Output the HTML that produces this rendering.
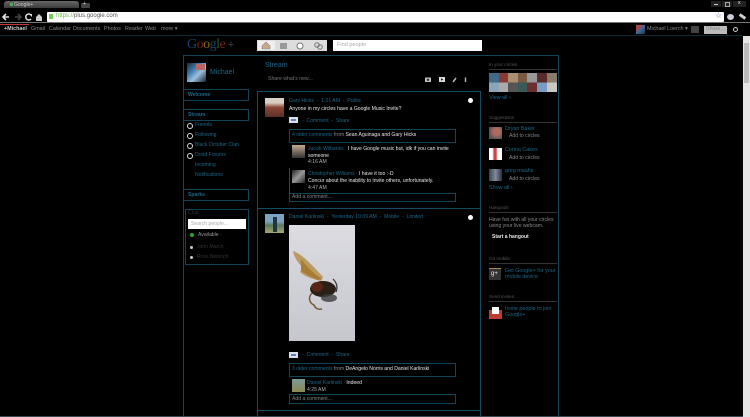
<!DOCTYPE html>
<html><head><meta charset="utf-8"><style>
html,body{margin:0;padding:0;background:#000;width:750px;height:417px;overflow:hidden}
body{position:relative;font-family:"Liberation Sans",sans-serif;font-size:5.1px;color:#ddd}
.a,.t{position:absolute}
.t{white-space:nowrap;line-height:7px}
.b{color:#1c6788}
.w{color:#e8e8e8}
.g{color:#888}
.n{font-size:5.4px;color:#8a8a8a;top:26px}
.box{position:absolute;border:1px solid #134558;box-sizing:border-box}
.hl{position:absolute;height:1px;background:#134558}
.vl{position:absolute;width:1px;background:#134558}
.rad{position:absolute;width:4px;height:4px;border:1px solid #ddd;border-radius:50%}
.head{position:absolute;height:1px;background:#333}
.h{color:#555;font-size:4.6px}
svg{position:absolute;overflow:visible}
</style></head><body>
<!-- chrome -->
<div class="a" style="left:4px;top:1px;width:75px;height:7px;background:linear-gradient(#666,#3c3c3c);border-radius:3px 3px 0 0"></div>
<div class="a" style="left:10px;top:3px;width:3px;height:3px;background:#5a5"></div>
<div class="t" style="left:14px;top:2px;color:#ccc">Google+</div>
<div class="a" style="left:81px;top:3px;width:9px;height:5px;background:#444;border-radius:1px"></div>
<div class="t w" style="left:83px;top:1px">+</div>
<div class="a" style="left:711px;top:1px;width:10px;height:6px;background:#222"></div>
<div class="a" style="left:722px;top:1px;width:10px;height:6px;background:#222"></div>
<div class="a" style="left:733px;top:1px;width:13px;height:6px;background:#222"></div>
<div class="a" style="left:714px;top:4px;width:4px;height:1px;background:#ccc"></div>
<div class="a" style="left:725px;top:2px;width:3px;height:3px;border:1px solid #aaa"></div>
<div class="t w" style="left:738px;top:0">x</div>
<svg width="50" height="12" style="left:0;top:11px"><path d="M3 6H9M6 3L3 6L6 9" fill="none" stroke="#e0e0e0" stroke-width="1.6"/><path d="M15 6H21M18 3L21 6L18 9" fill="none" stroke="#444" stroke-width="1.6"/><path d="M31 4A3 3 0 1 0 31 8" fill="none" stroke="#ddd" stroke-width="1.5"/><path d="M29 3h3v3z" fill="#ddd"/><path d="M36 6L39 3L42 6V10H36Z" fill="#ccc"/></svg>
<div class="a" style="left:47px;top:12px;width:677px;height:10px;background:#fff;border-radius:1px"></div>
<div class="a" style="left:49px;top:14px;width:4px;height:5px;background:#7c5"></div>
<div class="t" style="left:56px;top:13px;font-size:6px;color:#555"><span style="color:#6b4">https://</span>plus.google.com</div>
<div class="t" style="left:715px;top:12px;font-size:8px;color:#47a">☆</div>
<div class="a" style="left:727px;top:14px;width:7px;height:6px;background:#ccd;border-radius:50%"></div>
<div class="a" style="left:739px;top:15px;width:7px;height:3px;background:#ccc;transform:rotate(35deg)"></div>
<div class="a" style="left:0;top:22px;width:750px;height:1px;background:#777"></div>
<div class="a" style="left:0;top:24px;width:29px;height:1px;background:#c33"></div>
<div class="hl" style="left:0;top:35px;width:742px;background:#0d2a36"></div>
<!-- gbar -->
<div class="t" style="left:4px;top:26px;color:#ccc;font-weight:bold;font-size:5.4px">+Michael</div>
<div class="t n" style="left:31px">Gmail</div>
<div class="t n" style="left:49px">Calendar</div>
<div class="t n" style="left:73px">Documents</div>
<div class="t n" style="left:104px">Photos</div>
<div class="t n" style="left:125px">Reader</div>
<div class="t n" style="left:145px">Web</div>
<div class="t n" style="left:161px">more ▾</div>
<div class="a" style="left:636px;top:25px;width:9px;height:9px;background:linear-gradient(135deg,#a44 30%,#3a6aa0 50%,#234)"></div>
<div class="t n" style="left:647px">Michael Loerch ▾</div>
<div class="a" style="left:691px;top:26px;width:8px;height:7px;background:#444"></div>
<div class="a" style="left:704px;top:26px;width:23px;height:8px;background:#bbb"></div>
<div class="t" style="left:706px;top:26px;color:#888;font-size:5.4px">Share...</div>
<div class="a" style="left:733px;top:27px;width:3px;height:3px;border:1.5px solid #ccc;border-radius:50%"></div>
<!-- logo -->
<div class="t" style="left:187px;top:37px;font-family:'Liberation Serif',serif;font-size:14px;line-height:16px;letter-spacing:-.5px"><span style="color:#17446f">G</span><span style="color:#7a2018">o</span><span style="color:#8a6c18">o</span><span style="color:#17446f">g</span><span style="color:#1f6026">l</span><span style="color:#7a2018">e</span><span style="color:#444;font-size:11px;font-family:'Liberation Sans'"> +</span></div>
<!-- nav -->
<div class="a" style="left:257px;top:40px;width:70px;height:11px;background:#ddd"></div>
<div class="a" style="left:258px;top:41px;width:17px;height:9px;background:#efefef"></div>
<svg width="70" height="11" style="left:257px;top:40px"><path d="M5 6L9 2L13 6V9H5Z" fill="#c9a98a" stroke="#888" stroke-width=".6"/><rect x="23" y="3" width="7" height="6" fill="#999"/><circle cx="43" cy="6" r="3" fill="#fff" stroke="#777"/><circle cx="60" cy="5" r="2.3" fill="none" stroke="#777"/><circle cx="63" cy="7" r="2.3" fill="none" stroke="#777"/></svg>
<div class="a" style="left:333px;top:40px;width:149px;height:11px;background:#fff"></div>
<div class="t" style="left:337px;top:42px;font-size:5.6px;color:#aaa">Find people</div>
<!-- frame -->
<div class="hl" style="left:183px;top:55px;width:376px"></div>
<div class="vl" style="left:183px;top:55px;height:362px"></div>
<div class="vl" style="left:558px;top:55px;height:362px"></div>
<!-- left -->
<div class="a" style="left:187px;top:63px;width:19px;height:19px;background:linear-gradient(135deg,#234 5%,#3f7fb5 35%,#9ec0dc 60%,#123)"></div>
<div class="a" style="left:196px;top:64px;width:9px;height:6px;background:#b66"></div>
<div class="t b" style="left:210px;top:69px;font-size:7px">Michael</div>
<div class="box" style="left:183px;top:89px;width:66px;height:12px"></div>
<div class="t b" style="left:188px;top:92px;font-weight:bold">Welcome</div>
<div class="box" style="left:183px;top:109px;width:66px;height:12px"></div>
<div class="t b" style="left:188px;top:112px;font-weight:bold">Stream</div>
<div class="rad" style="left:187px;top:123px"></div><div class="t b" style="left:195px;top:122px">Friends</div>
<div class="rad" style="left:187px;top:133px"></div><div class="t b" style="left:195px;top:132px">Following</div>
<div class="rad" style="left:187px;top:143px"></div><div class="t b" style="left:195px;top:142px">Black October Clan</div>
<div class="rad" style="left:187px;top:153px"></div><div class="t b" style="left:195px;top:152px">Droid Forums</div>
<div class="t b" style="left:195px;top:162px">Incoming</div>
<div class="t b" style="left:195px;top:172px">Notifications</div>
<div class="box" style="left:183px;top:189px;width:66px;height:12px"></div>
<div class="t b" style="left:188px;top:192px;font-weight:bold">Sparks</div>
<div class="box" style="left:185px;top:209px;width:64px;height:56px"></div>
<div class="t" style="left:188px;top:210px;color:#333">Chat</div>
<div class="a" style="left:188px;top:219px;width:58px;height:10px;background:#fff"></div>
<div class="t" style="left:191px;top:221px;color:#aaa">Search people...</div>
<div class="a" style="left:190px;top:233px;width:4px;height:4px;background:#2a2;border-radius:50%"></div>
<div class="t" style="left:198px;top:232px;color:#999">Available ·</div>
<div class="a" style="left:190px;top:246px;width:3px;height:3px;background:#ccc;border-radius:50%"></div>
<div class="t" style="left:197px;top:244px;color:#333">John March</div>
<div class="a" style="left:190px;top:256px;width:3px;height:3px;background:#ccc;border-radius:50%"></div>
<div class="t" style="left:197px;top:254px;color:#333">Ross Belonch</div>
<!-- stream -->
<div class="t b" style="left:265px;top:62px;font-size:7px">Stream</div>
<div class="t" style="left:268px;top:76px;color:#777;font-size:5.2px">Share what's new...</div>
<svg width="50" height="8" style="left:424px;top:76px"><rect x="1" y="1.5" width="6" height="4.5" fill="#bbb"/><circle cx="4" cy="3.8" r="1.2" fill="#333"/><rect x="15" y="1" width="6" height="5" fill="#ddd"/><path d="M17 2.3L19.5 3.5L17 4.8Z" fill="#222"/><path d="M29 6L32 2" stroke="#bbb" stroke-width="1.5"/><path d="M41.500 1.500V6" stroke="#bbb" stroke-width="1.4"/></svg>
<!-- post 1 -->
<div class="box" style="left:257px;top:91px;width:224px;height:326px;border-color:#134d64;border-bottom:0"></div>
<div class="a" style="left:265px;top:98px;width:19px;height:19px;background:linear-gradient(#d8cfc4 25%,#8a4434 50%,#5a3028)"></div>
<div class="t b" style="left:289px;top:98px">Gary Hicks &nbsp;-&nbsp; 1:21 AM &nbsp;-&nbsp; Public</div>
<div class="t w" style="left:289px;top:106px">Anyone in my circles have a Google Music Invite?</div>
<div class="a" style="left:468px;top:98px;width:5px;height:5px;background:#fff;border-radius:50%"></div>
<div class="a" style="left:289px;top:117px;width:9px;height:6px;background:#dde"></div>
<div class="a" style="left:291px;top:119px;width:5px;height:2px;background:#58b"></div>
<div class="t b" style="left:302px;top:118px"> - &nbsp;Comment &nbsp;- &nbsp;Share</div>
<div class="box" style="left:289px;top:129px;width:167px;height:14px"></div>
<div class="t" style="left:292px;top:132px"><span class="b">4 older comments</span> <span class="g">from</span> <span class="w">Sean Aguinaga and Gary Hicks</span></div>
<div class="a" style="left:292px;top:145px;width:13px;height:13px;background:linear-gradient(#c4a890,#333)"></div>
<div class="t" style="left:308px;top:146px"><span class="b">Jacob Wilbanks</span> &nbsp; <span class="w">I have Google music but, idk if you can invite</span></div>
<div class="t w" style="left:308px;top:153px">someone</div>
<div class="t" style="left:308px;top:159px;color:#aaa">4:16 AM</div>
<div class="vl" style="left:289px;top:168px;height:25px;background:#1d4f66"></div>
<div class="a" style="left:292px;top:170px;width:13px;height:13px;background:linear-gradient(135deg,#222,#999 50%,#222)"></div>
<div class="t" style="left:308px;top:171px"><span class="b">Christopher Williams</span> &nbsp; <span class="w">I have it too :-D</span></div>
<div class="t w" style="left:308px;top:178px">Concur about the inability to invite others, unfortunately.</div>
<div class="t" style="left:308px;top:185px;color:#aaa">4:47 AM</div>
<div class="box" style="left:289px;top:193px;width:167px;height:9px"></div>
<div class="t" style="left:292px;top:194px;color:#888">Add a comment...</div>
<!-- post 2 -->
<div class="hl" style="left:257px;top:208px;width:224px;background:#134d64"></div>
<div class="a" style="left:265px;top:214px;width:19px;height:19px;background:linear-gradient(#7aa4c0 40%,#5a7a5a 60%,#a8a870)"></div>
<div class="a" style="left:273px;top:217px;width:4px;height:15px;background:#234"></div>
<div class="t b" style="left:289px;top:214px">Daniel Karlinski &nbsp;-&nbsp; Yesterday 10:09 AM &nbsp;-&nbsp; Mobile &nbsp;-&nbsp; Limited</div>
<div class="a" style="left:468px;top:215px;width:5px;height:5px;background:#fff;border-radius:50%"></div>
<div class="a" style="left:289px;top:225px;width:66px;height:116px;background:linear-gradient(#dcdce2,#c6c6ce)">
<svg width="66" height="116" style="left:0;top:0"><path d="M4 26C12 28 25 42 34 52L32 56C24 54 16 52 11 47C12 45 13 44 14 43C9 38 5 32 4 26Z" fill="#b99a60"/><path d="M12 34C18 42 26 50 33 54L29 55C22 52 15 48 12 46Z" fill="#a87c34"/><ellipse cx="34" cy="64" rx="13" ry="8" fill="#2b2018"/><ellipse cx="28" cy="62" rx="6" ry="5" fill="#5a2418"/><ellipse cx="40" cy="73" rx="8" ry="4" fill="#3c3c40" opacity=".8"/><path d="M23 68C19 72 20 78 25 80C26 83 29 85 33 84" fill="none" stroke="#7a5a38" stroke-width="1.5"/><path d="M44 54C48 58 49 62 47 67" fill="none" stroke="#333" stroke-width="1.2"/></svg>
</div>
<div class="a" style="left:289px;top:352px;width:9px;height:6px;background:#dde"></div>
<div class="a" style="left:291px;top:354px;width:5px;height:2px;background:#58b"></div>
<div class="t b" style="left:302px;top:352px"> - &nbsp;Comment &nbsp;- &nbsp;Share</div>
<div class="box" style="left:289px;top:363px;width:167px;height:14px"></div>
<div class="t" style="left:292px;top:366px"><span class="b">3 older comments</span> <span class="g">from</span> <span class="w">DeAngelo Norris and Daniel Karlinski</span></div>
<div class="a" style="left:292px;top:379px;width:13px;height:13px;background:linear-gradient(#7a9a9a,#8a8a50)"></div>
<div class="t" style="left:307px;top:380px"><span class="b">Daniel Karlinski</span> &nbsp; <span class="w">Indeed</span></div>
<div class="t" style="left:307px;top:387px;color:#aaa">4:25 AM</div>
<div class="box" style="left:289px;top:394px;width:167px;height:10px"></div>
<div class="t" style="left:292px;top:396px;color:#888">Add a comment...</div>
<div class="hl" style="left:257px;top:410px;width:224px;background:#134d64"></div>
<div class="hl" style="left:0;top:416px;width:750px;background:#3a4a50"></div>
<!-- right -->
<div class="t h" style="left:489px;top:61px">In your circles</div>
<div class="head" style="left:489px;top:69px;width:68px"></div>
<svg width="68" height="19" style="left:489px;top:73px"><g>
<rect x="0" y="0" width="10" height="9.500" fill="#3f6a8a"/><rect x="10" y="0" width="9" height="9.500" fill="#8a3a34"/><rect x="19" y="0" width="10" height="9.500" fill="#a89070"/><rect x="29" y="0" width="9" height="9.500" fill="#7a5a44"/><rect x="38" y="0" width="10" height="9.500" fill="#999"/><rect x="48" y="0" width="10" height="9.500" fill="#5a2a28"/><rect x="58" y="0" width="10" height="9.500" fill="#8a7a6a"/>
<rect x="0" y="9.500" width="10" height="9.500" fill="#8aa4b8"/><rect x="10" y="9.500" width="9" height="9.500" fill="#aaa"/><rect x="19" y="9.500" width="10" height="9.500" fill="#555"/><rect x="29" y="9.500" width="9" height="9.500" fill="#3a5a5a"/><rect x="38" y="9.500" width="10" height="9.500" fill="#6a3030"/><rect x="48" y="9.500" width="10" height="9.500" fill="#7a9cc0"/><rect x="58" y="9.500" width="10" height="9.500" fill="#c8c8c0"/></g></svg>
<div class="t b" style="left:489px;top:95px;font-size:5.4px">View all ›</div>
<div class="t h" style="left:489px;top:114px">Suggestions</div>
<div class="head" style="left:489px;top:122px;width:68px"></div>
<div class="a" style="left:489px;top:127px;width:13px;height:12px;background:radial-gradient(circle at 60% 40%,#b06a60 30%,#555 75%)"></div>
<div class="t b" style="left:505px;top:126px;font-size:5.4px">Dryan Baker</div>
<div class="t" style="left:509px;top:133px;color:#888">Add to circles</div>
<div class="a" style="left:489px;top:148px;width:13px;height:12px;background:linear-gradient(90deg,#fff 25%,#c44 40%,#c44 55%,#fff 65%)"></div>
<div class="t b" style="left:505px;top:147px;font-size:5.4px">Corina Cakes</div>
<div class="t" style="left:509px;top:155px;color:#888">Add to circles</div>
<div class="a" style="left:489px;top:169px;width:13px;height:12px;background:linear-gradient(90deg,#345,#889 50%,#234)"></div>
<div class="t b" style="left:505px;top:168px;font-size:5.4px">greg maahs</div>
<div class="t" style="left:509px;top:176px;color:#888">Add to circles</div>
<div class="t b" style="left:489px;top:185px;font-size:5.4px">Show all ›</div>
<div class="t h" style="left:489px;top:204px">Hangouts</div>
<div class="head" style="left:489px;top:212px;width:68px"></div>
<div class="t" style="left:489px;top:217px;color:#888">Have fun with all your circles</div>
<div class="t" style="left:489px;top:223px;color:#888">using your live webcam.</div>
<div class="t w" style="left:492px;top:234px;font-weight:bold;font-size:5px">Start a hangout</div>
<div class="t h" style="left:489px;top:255px">Go mobile</div>
<div class="head" style="left:489px;top:263px;width:68px"></div>
<div class="a" style="left:489px;top:268px;width:12px;height:11px;background:#333;border-top:1px solid #a84"></div>
<div class="t w" style="left:491px;top:271px;font-size:6px">g+</div>
<div class="t b" style="left:505px;top:268px;font-size:5.4px">Get Google+ for your</div>
<div class="t b" style="left:505px;top:274px;font-size:5.4px">mobile device</div>
<div class="t h" style="left:489px;top:293px">Send invites</div>
<div class="head" style="left:489px;top:301px;width:68px"></div>
<div class="a" style="left:489px;top:310px;width:13px;height:9px;background:#c23b32"></div>
<div class="a" style="left:492px;top:307px;width:7px;height:7px;background:#fff"></div>
<div class="t b" style="left:505px;top:306px;font-size:5.4px">Invite people to join</div>
<div class="t b" style="left:505px;top:312px;font-size:5.4px">Google+</div>
<!-- scrollbar -->
<div class="a" style="left:743px;top:36px;width:7px;height:381px;background:#e4e4e4"></div>
<div class="a" style="left:744px;top:43px;width:5px;height:40px;background:#bbb"></div>
</body></html>
